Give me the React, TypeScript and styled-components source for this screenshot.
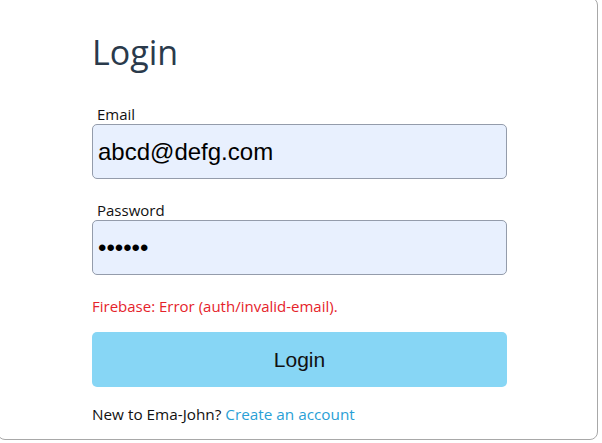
import React from 'react';
import styled, { createGlobalStyle } from 'styled-components';

const GlobalStyle = createGlobalStyle`
  html, body {
    margin: 0;
    padding: 0;
    background: #ffffff;
    overflow: hidden;
  }
  body {
    font-family: 'Open Sans', 'Noto Sans', sans-serif;
  }
`;

const Card = styled.div`
  box-sizing: border-box;
  width: 601px;
  height: 443px;
  margin: -3px 0 0 -3px;
  border: 1px solid #a8a8a8;
  border-radius: 8px;
  padding: 30px 0 0 94px;
`;

const Form = styled.form`
  width: 415px;
  display: flex;
  flex-direction: column;
`;

const Title = styled.h2`
  margin: 0 0 29px;
  font-family: 'Open Sans', sans-serif;
  font-size: 34px;
  font-weight: 400;
  line-height: 48px;
  color: #2a3a4b;
`;

const Field = styled.div<{ $gap?: number }>`
  display: flex;
  flex-direction: column;
  margin-bottom: ${({ $gap }) => $gap ?? 22}px;
`;

const Label = styled.label`
  padding-left: 5px;
  font-family: 'Open Sans', sans-serif;
  font-size: 15px;
  line-height: 19px;
  color: #111111;
`;

const Input = styled.input`
  box-sizing: border-box;
  width: 100%;
  height: 55px;
  margin: 0;
  padding: 0 5px;
  border: 1px solid #949cab;
  border-radius: 5px;
  background: #e8f0fe;
  font-family: 'Liberation Sans', Arial, sans-serif;
  font-size: 24px;
  color: #000000;
  outline: none;
`;

const ErrorText = styled.p`
  margin: 0 0 15px;
  font-family: 'Open Sans', sans-serif;
  font-size: 15px;
  line-height: 22px;
  color: #e5232b;
`;

const Submit = styled.button`
  height: 55px;
  border: none;
  border-radius: 5px;
  background: #87d6f5;
  font-family: 'Liberation Sans', Arial, sans-serif;
  font-size: 21px;
  color: #111111;
  cursor: pointer;
`;

const Footer = styled.p`
  margin: 16px 0 0;
  font-family: 'Open Sans', sans-serif;
  font-size: 15.3px;
  line-height: 22px;
  color: #111111;
`;

const Link = styled.a<{ $accent?: string }>`
  color: ${({ $accent }) => $accent || '#2a9fd6'};
  text-decoration: none;
`;

export default function App() {
  return (
    <>
      <GlobalStyle />
      <Card>
        <Form onSubmit={(e) => e.preventDefault()}>
          <Title>Login</Title>
          <Field>
            <Label htmlFor="email">Email</Label>
            <Input id="email" type="text" defaultValue="abcd@defg.com" />
          </Field>
          <Field $gap={20}>
            <Label htmlFor="password">Password</Label>
            <Input id="password" type="password" defaultValue="123456" />
          </Field>
          <ErrorText>Firebase: Error (auth/invalid-email).</ErrorText>
          <Submit type="submit">Login</Submit>
          <Footer>
            New to Ema-John? <Link href="#">Create an account</Link>
          </Footer>
        </Form>
      </Card>
    </>
  );
}
